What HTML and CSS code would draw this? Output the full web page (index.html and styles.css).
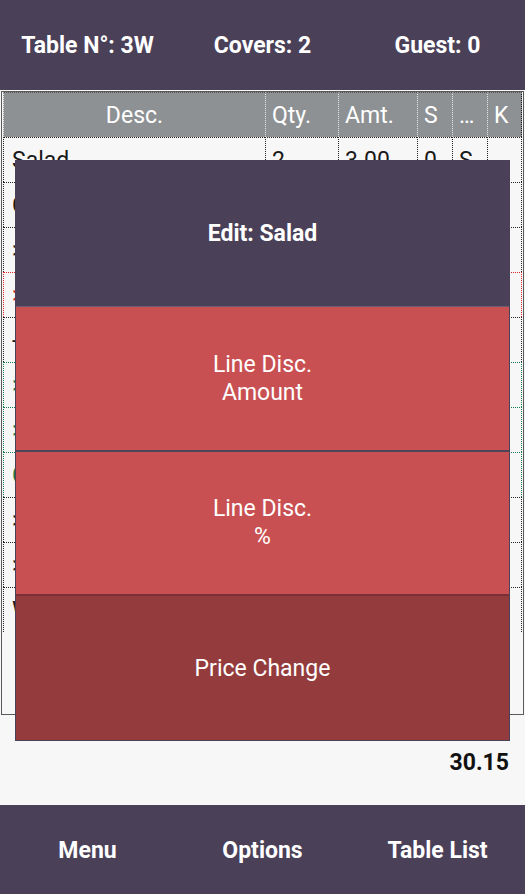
FILE: index.html
```html
<!DOCTYPE html>
<html>
<head>
<meta charset="utf-8">
<link rel="stylesheet" href="styles.css">
</head>
<body>
<div class="app">
  <header class="topbar">
    <div class="topcell">Table N°: 3W</div>
    <div class="topcell">Covers: 2</div>
    <div class="topcell">Guest: 0</div>
  </header>
  <main class="content">
    <div class="tablewrap">
      <table class="order">
        <thead>
          <tr>
            <th class="c-desc center">Desc.</th>
            <th class="c-qty">Qty.</th>
            <th class="c-amt">Amt.</th>
            <th class="c-s">S</th>
            <th class="c-x">…</th>
            <th class="c-k last">K</th>
          </tr>
        </thead>
        <tbody>
          <tr><td>Salad</td><td>2</td><td>3.00</td><td>0</td><td>S</td><td class="last"></td></tr>
          <tr><td>Chicken</td><td>1</td><td>8.50</td><td>0</td><td>S</td><td class="last"></td></tr>
          <tr><td>&gt; Rare</td><td></td><td></td><td></td><td></td><td class="last"></td></tr>
          <tr class="red"><td class="redtxt">&gt; No salt</td><td></td><td></td><td></td><td></td><td class="last"></td></tr>
          <tr><td>- Fries</td><td></td><td></td><td></td><td></td><td class="last"></td></tr>
          <tr class="green"><td class="greentxt">&gt; Extra</td><td></td><td></td><td></td><td></td><td class="last"></td></tr>
          <tr class="green"><td class="greentxt">&gt; Sauce</td><td></td><td></td><td></td><td></td><td class="last"></td></tr>
          <tr class="green"><td class="greentxt bold">Coffee</td><td></td><td></td><td></td><td></td><td class="last"></td></tr>
          <tr><td>&gt; Sugar</td><td></td><td></td><td></td><td></td><td class="last"></td></tr>
          <tr><td>&gt; Milk</td><td></td><td></td><td></td><td></td><td class="last"></td></tr>
          <tr><td>Water</td><td>1</td><td>2.00</td><td>0</td><td>S</td><td class="last"></td></tr>
        </tbody>
      </table>
    </div>
    <div class="total">30.15</div>
  </main>
  <footer class="bottombar">
    <div class="topcell">Menu</div>
    <div class="topcell">Options</div>
    <div class="topcell">Table List</div>
  </footer>

  <div class="modal">
    <div class="mbtn mtitle">Edit: Salad</div>
    <div class="mbtn mred red1 sep-dark">Line Disc.<br>Amount</div>
    <div class="mbtn mred red2 sep-wine">Line Disc.<br>%</div>
    <div class="mbtn mwine">Price Change</div>
  </div>
</div>
</body>
</html>
```

FILE: styles.css
```css
html, body {
  margin: 0;
  padding: 0;
}
body {
  background: #f7f7f7;
  font-family: Roboto, "Noto Sans", Arial, sans-serif;
  color: #1a1a1a;
}
.app {
  position: relative;
  width: 525px;
  height: 894px;
  display: flex;
  flex-direction: column;
  overflow: hidden;
}
.topbar, .bottombar {
  background: #4a4058;
  color: #ffffff;
  display: grid;
  grid-template-columns: 1fr 1fr 1fr;
  align-items: center;
  font-weight: 700;
  font-size: 23px;
}
.topbar {
  height: 90px;
  flex: none;
}
.bottombar {
  height: 89px;
  flex: none;
  padding-top: 2px;
  box-sizing: border-box;
}
.topcell {
  text-align: center;
}
.content {
  flex: 1;
  display: flex;
  flex-direction: column;
}
.tablewrap {
  margin: 1px 1px 0 1px;
  height: 622px;
  border: 1px solid #5a5a5a;
  padding: 0 1px;
  box-sizing: content-box;
}
.order {
  width: 100%;
  border-collapse: separate;
  border-spacing: 0;
  table-layout: fixed;
  font-size: 23px;
}
.order th, .order td {
  height: 44px;
  padding: 0 0 0 6px;
  border-top: 1px dotted #222;
  border-left: 1px dotted #222;
  text-align: left;
  white-space: nowrap;
  overflow: hidden;
  font-weight: 400;
}
.order th.last, .order td.last {
  border-right: 1px dotted #222;
}
.order thead th {
  background: #8e9194;
  color: #ffffff;
  border-color: #e8e8e8;
  border-top-color: #555;
}
.order th.center {
  text-align: center;
  padding: 0;
}
.order td:first-child {
  padding-left: 8px;
}
.c-desc { width: 261px; }
.c-qty { width: 66px; }
.c-amt { width: 72px; }
.c-s { width: 28px; }
.c-x { width: 28px; }
.order tr.red td {
  border-top-color: #e02424;
  border-left-color: #e02424;
  border-right-color: #e02424;
}
.order tr.green td {
  border-top-color: #157a4c;
  border-left-color: #157a4c;
  border-right-color: #157a4c;
}
.redtxt { color: #e02424; }
.greentxt { color: #157a4c; }
.bold { font-weight: 700; }
.total {
  flex: 1;
  display: flex;
  align-items: center;
  justify-content: flex-end;
  padding-right: 16px;
  padding-top: 4px;
  font-size: 23px;
  font-weight: 700;
  color: #111;
}
.modal {
  position: absolute;
  left: 15px;
  top: 160px;
  width: 495px;
  height: 581px;
  box-sizing: border-box;
  border: 1px solid #4a4058;
  display: flex;
  flex-direction: column;
  background: #4a4058;
}
.mbtn {
  display: flex;
  align-items: center;
  justify-content: center;
  text-align: center;
  color: #ffffff;
  font-size: 23px;
  line-height: 28px;
}
.mtitle {
  height: 145px;
  background: #4a4058;
  font-weight: 700;
  border-bottom: 1px solid #6a5f72;
}
.mred {
  background: #c95052;
  box-sizing: border-box;
}
.red1 {
  height: 145px;
}
.red2 {
  height: 144px;
}
.sep-dark {
  border-bottom: 2px solid #4e4459;
}
.sep-wine {
  border-bottom: 2px solid #7a2f36;
}
.mwine {
  flex: 1;
  background: #943c3d;
  padding-top: 1px;
}
```
